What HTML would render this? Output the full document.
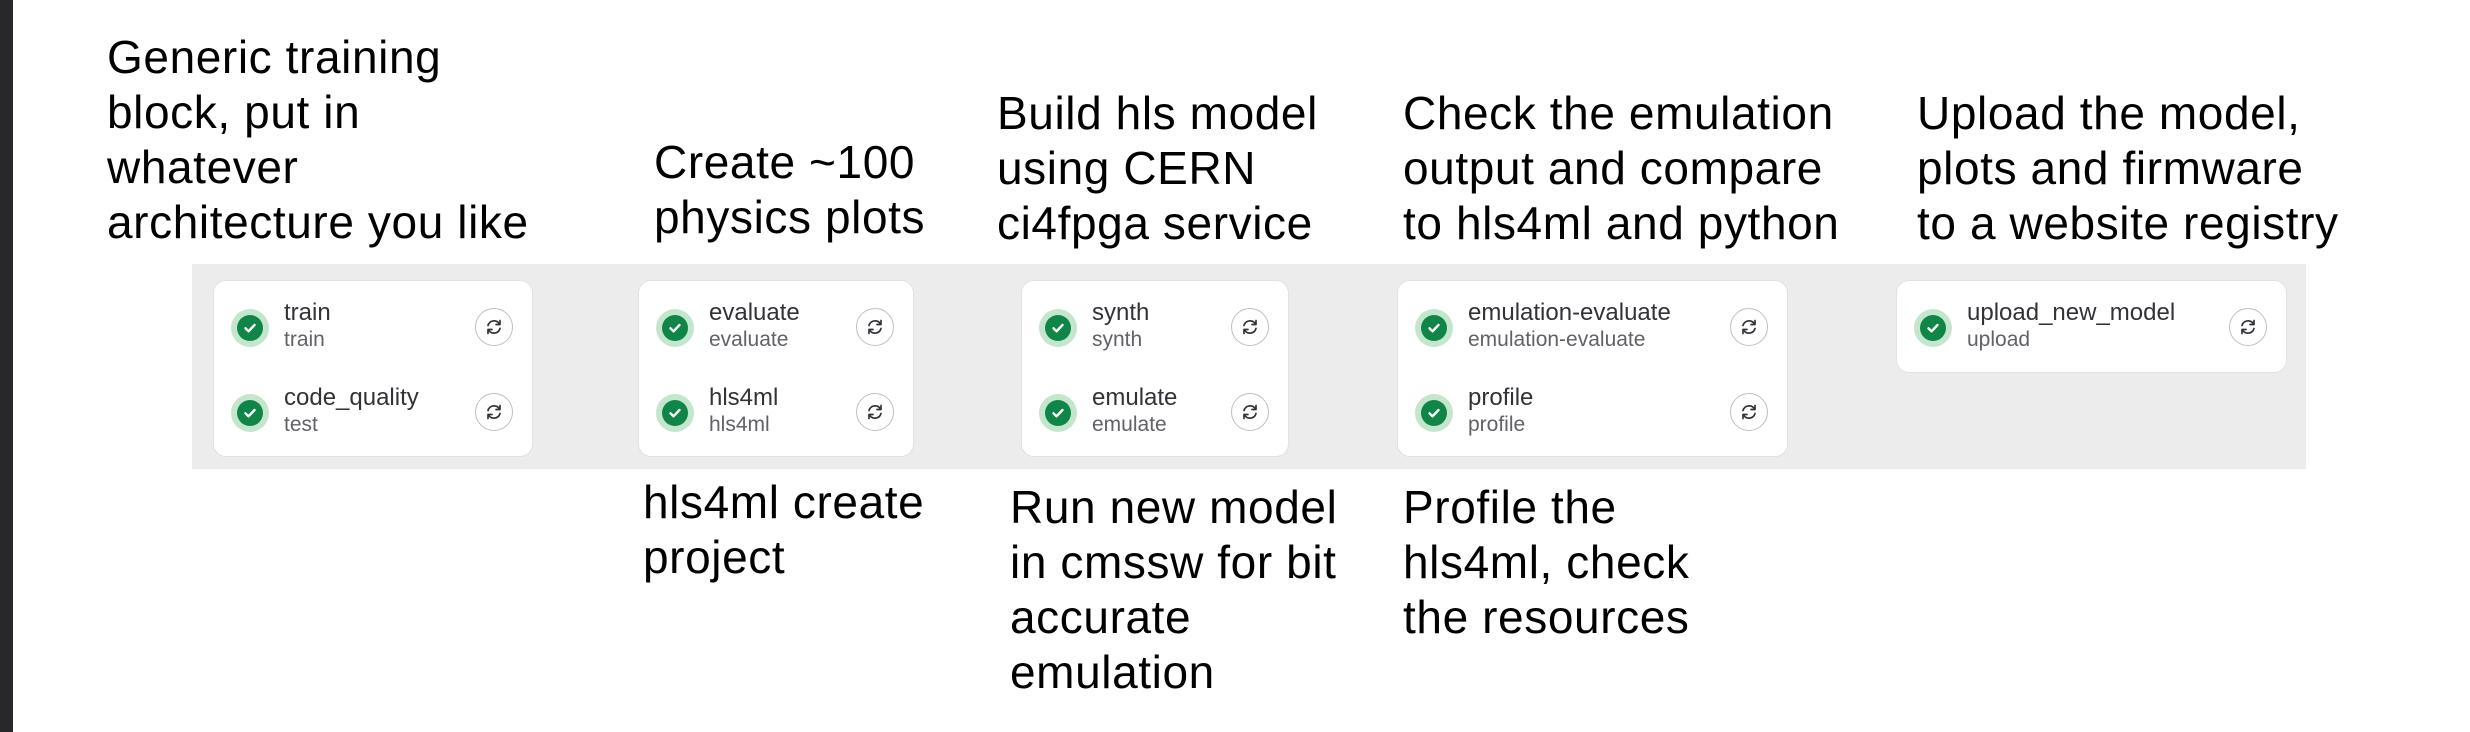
<!DOCTYPE html>
<html><head><style>
body{margin:0;width:2470px;height:732px;background:#fff;position:relative;overflow:hidden;font-family:"Liberation Sans",Arial,sans-serif}
.bar{position:absolute;left:0;top:0;width:13px;height:732px;background:#28282c}
.t{position:absolute;font-size:46px;line-height:55px;color:#000;letter-spacing:0.6px;white-space:nowrap}
.band{position:absolute;left:192px;top:264px;width:2114px;height:205px;background:#ececed}
.card{position:absolute;background:#fff;border:1px solid #e2e2e4;border-radius:13px;box-sizing:border-box}
.row{position:absolute;left:0;right:0;height:60px}
.ck{position:absolute;left:17px;top:11px;width:38px;height:38px;border-radius:50%;background:#c3e6cd}
.ck::after{content:"";position:absolute;left:6px;top:6px;width:26px;height:26px;border-radius:50%;background:#108548}
.ck svg{position:absolute;left:11px;top:11px;z-index:2}
.nm{position:absolute;left:70px;top:1px;font-size:24px;color:#333238}
.sb{position:absolute;left:70px;top:30px;font-size:21px;color:#626168}
.rb{position:absolute;right:19px;top:10px;width:38px;height:38px;border-radius:50%;border:1px solid #bfbfc3;box-sizing:border-box;background:#fff}
.rb svg{position:absolute;left:8px;top:8px}
</style></head><body>
<div class="bar"></div>
<div class="t" style="left:107px;top:30px">Generic training<br>block, put in<br>whatever<br>architecture you like</div>
<div class="t" style="left:654px;top:135px">Create ~100<br>physics plots</div>
<div class="t" style="left:997px;top:86px">Build hls model<br>using CERN<br>ci4fpga service</div>
<div class="t" style="left:1403px;top:86px">Check the emulation<br>output and compare<br>to hls4ml and python</div>
<div class="t" style="left:1917px;top:86px">Upload the model,<br>plots and firmware<br>to a website registry</div>
<div class="t" style="left:643px;top:475px">hls4ml create<br>project</div>
<div class="t" style="left:1010px;top:480px">Run new model<br>in cmssw for bit<br>accurate<br>emulation</div>
<div class="t" style="left:1403px;top:480px">Profile the<br>hls4ml, check<br>the resources</div>
<div class="band"></div>

<svg width="0" height="0" style="position:absolute"><defs>
<symbol id="c" viewBox="0 0 16 16"><path d="M3.5 8.3l3 3 6-6.3" fill="none" stroke="#fff" stroke-width="2.4" stroke-linecap="round" stroke-linejoin="round"/></symbol>
<symbol id="r" viewBox="0 0 20 20"><path d="M4 8.5A6.3 6.3 0 0 1 15.5 7M16 11.5A6.3 6.3 0 0 1 4.5 13" fill="none" stroke="#333238" stroke-width="1.7" stroke-linecap="round"/><path d="M16 3.5v4h-4M4 16.5v-4h4" fill="none" stroke="#333238" stroke-width="1.7" stroke-linecap="round" stroke-linejoin="round"/></symbol>
</defs></svg>

<div class="card" style="left:213px;top:280px;width:320px;height:177px">
 <div class="row" style="top:17px"><div class="ck"><svg width="16" height="16"><use href="#c"/></svg></div><div class="nm">train</div><div class="sb">train</div><div class="rb"><svg width="20" height="20"><use href="#r"/></svg></div></div>
 <div class="row" style="top:102px"><div class="ck"><svg width="16" height="16"><use href="#c"/></svg></div><div class="nm">code_quality</div><div class="sb">test</div><div class="rb"><svg width="20" height="20"><use href="#r"/></svg></div></div>
</div>
<div class="card" style="left:638px;top:280px;width:276px;height:177px">
 <div class="row" style="top:17px"><div class="ck"><svg width="16" height="16"><use href="#c"/></svg></div><div class="nm">evaluate</div><div class="sb">evaluate</div><div class="rb"><svg width="20" height="20"><use href="#r"/></svg></div></div>
 <div class="row" style="top:102px"><div class="ck"><svg width="16" height="16"><use href="#c"/></svg></div><div class="nm">hls4ml</div><div class="sb">hls4ml</div><div class="rb"><svg width="20" height="20"><use href="#r"/></svg></div></div>
</div>
<div class="card" style="left:1021px;top:280px;width:268px;height:177px">
 <div class="row" style="top:17px"><div class="ck"><svg width="16" height="16"><use href="#c"/></svg></div><div class="nm">synth</div><div class="sb">synth</div><div class="rb"><svg width="20" height="20"><use href="#r"/></svg></div></div>
 <div class="row" style="top:102px"><div class="ck"><svg width="16" height="16"><use href="#c"/></svg></div><div class="nm">emulate</div><div class="sb">emulate</div><div class="rb"><svg width="20" height="20"><use href="#r"/></svg></div></div>
</div>
<div class="card" style="left:1397px;top:280px;width:391px;height:177px">
 <div class="row" style="top:17px"><div class="ck"><svg width="16" height="16"><use href="#c"/></svg></div><div class="nm">emulation-evaluate</div><div class="sb">emulation-evaluate</div><div class="rb"><svg width="20" height="20"><use href="#r"/></svg></div></div>
 <div class="row" style="top:102px"><div class="ck"><svg width="16" height="16"><use href="#c"/></svg></div><div class="nm">profile</div><div class="sb">profile</div><div class="rb"><svg width="20" height="20"><use href="#r"/></svg></div></div>
</div>
<div class="card" style="left:1896px;top:280px;width:391px;height:93px">
 <div class="row" style="top:17px"><div class="ck"><svg width="16" height="16"><use href="#c"/></svg></div><div class="nm">upload_new_model</div><div class="sb">upload</div><div class="rb"><svg width="20" height="20"><use href="#r"/></svg></div></div>
</div>
</body></html>
